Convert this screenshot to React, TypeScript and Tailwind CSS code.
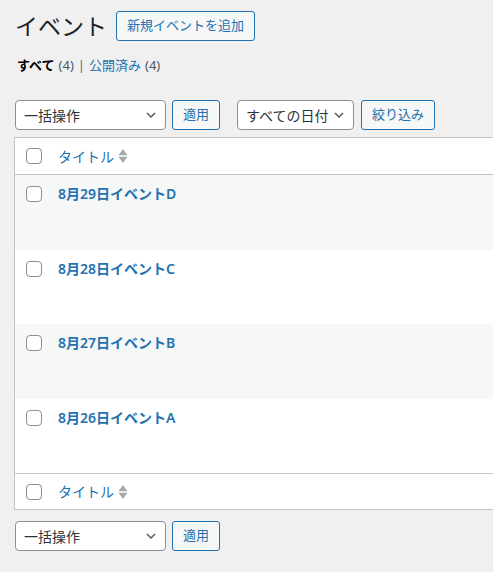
import React from "react";

const font = {
  fontFamily: '"Noto Sans", "Noto Sans CJK JP", sans-serif',
};

function Chevron() {
  return (
    <svg width="16" height="16" viewBox="0 0 20 20" className="shrink-0">
      <path d="M5 7.5l5 5 5-5" fill="none" stroke="#50575e" strokeWidth="1.8" />
    </svg>
  );
}

function Select({ label, width }: { label: string; width: string }) {
  return (
    <div
      className={`${width} h-[30px] flex items-center justify-between pl-[8px] pr-[6px] bg-white border border-[#8c8f94] rounded-[4px] text-[14px] text-[#2c3338]`}
    >
      <span>{label}</span>
      <Chevron />
    </div>
  );
}

function Button({ label, width }: { label: string; width: string }) {
  return (
    <div
      className={`${width} h-[30px] flex items-center justify-center bg-[#f6f7f7] border border-[#2271b1] rounded-[3px] text-[13px] text-[#2271b1]`}
    >
      {label}
    </div>
  );
}

function Checkbox() {
  return (
    <div className="w-[16px] h-[16px] bg-white border border-[#8c8f94] rounded-[4px] shrink-0" />
  );
}

function SortArrows() {
  return (
    <svg width="10" height="16" viewBox="0 0 10 16" className="ml-[4px]">
      <path d="M5 1l4.5 6.2H0.5z" fill="#a7aaad" />
      <path d="M5 15l4.5-6.2H0.5z" fill="#a7aaad" />
    </svg>
  );
}

function HeadRow({ border, height }: { border: string; height: string }) {
  return (
    <div className={`${height} flex items-center ${border} border-[#c3c4c7]`}>
      <div className="w-[43px] pl-[11px] flex items-center">
        <Checkbox />
      </div>
      <div className="flex items-center text-[14px] text-[#2271b1]">
        タイトル
        <SortArrows />
      </div>
    </div>
  );
}

const rows = ["8月29日イベントD", "8月28日イベントC", "8月27日イベントB", "8月26日イベントA"];

export default function App() {
  return (
    <div className="min-h-[572px] w-[493px] overflow-hidden bg-[#f0f0f1] text-[#1d2327]" style={font}>
      <div className="pt-[11px] pl-[15px] flex items-center gap-[9px]">
        <h1 className="text-[23px] leading-[30px] font-normal text-[#1d2327]">イベント</h1>
        <Button label="新規イベントを追加" width="w-[139px]" />
      </div>

      <div className="mt-[15px] pl-[17px] flex items-center text-[13px] leading-[18px] text-[#50575e]">
        <span className="font-bold text-black">すべて</span>
        <span className="ml-[4px]">(4)</span>
        <span className="mx-[4px] text-[#646970]">|</span>
        <span className="text-[#2271b1]">公開済み</span>
        <span className="ml-[4px]">(4)</span>
      </div>

      <div className="mt-[26px] pl-[15px] flex items-center">
        <Select label="一括操作" width="w-[151px]" />
        <div className="ml-[6px]">
          <Button label="適用" width="w-[48px]" />
        </div>
        <div className="ml-[17px]">
          <Select label="すべての日付" width="w-[117px]" />
        </div>
        <div className="ml-[7px]">
          <Button label="絞り込み" width="w-[74px]" />
        </div>
      </div>

      <div className="mt-[7px] ml-[14px] w-[500px] bg-white border border-[#c3c4c7]">
        <HeadRow border="border-b" height="h-[37px]" />
        {rows.map((title, i) => (
          <div
            key={title}
            className={`h-[74.5px] flex items-start pt-[11px] ${i % 2 === 0 ? "bg-[#f6f7f7]" : "bg-white"}`}
          >
            <div className="w-[43px] pl-[11px] flex items-center">
              <Checkbox />
            </div>
            <div className="text-[14px] leading-[16px] font-semibold text-[#2271b1]">{title}</div>
          </div>
        ))}
        <HeadRow border="border-t" height="h-[36px]" />
      </div>

      <div className="mt-[11px] pl-[15px] flex items-center">
        <Select label="一括操作" width="w-[151px]" />
        <div className="ml-[6px]">
          <Button label="適用" width="w-[48px]" />
        </div>
      </div>
    </div>
  );
}
